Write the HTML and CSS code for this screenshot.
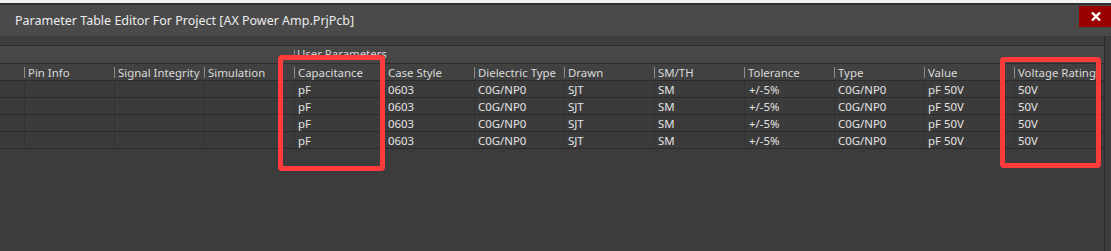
FILE: index.html
```html
<!DOCTYPE html>
<html>
<head>
<meta charset="utf-8">
<link rel="stylesheet" href="styles.css">
</head>
<body>
<div class="topstrip"></div>
<div class="topline"></div>
<div class="titlebar">
  <div class="title">Parameter Table Editor For Project [AX Power Amp.PrjPcb]</div>
  <div class="close">
    <svg width="10" height="9" viewBox="0 0 10 9"><path d="M1 0.5 L9 8.5 M9 0.5 L1 8.5" stroke="#ffffff" stroke-width="2.4" fill="none"/></svg>
  </div>
</div>
<div class="main">
  <div class="content">
    <div class="strip"></div>
    <div class="grouprow">
      <div class="group"><span class="gsep"></span><span class="gtext">User Parameters</span></div>
    </div>
    <div class="row header">
      <div class="cell first"></div>
      <div class="cell"><span class="sep"></span>Pin Info</div>
      <div class="cell"><span class="sep"></span>Signal Integrity</div>
      <div class="cell"><span class="sep"></span>Simulation</div>
      <div class="cell"><span class="sep"></span>Capacitance</div>
      <div class="cell"><span class="sep"></span>Case Style</div>
      <div class="cell"><span class="sep"></span>Dielectric Type</div>
      <div class="cell"><span class="sep"></span>Drawn</div>
      <div class="cell"><span class="sep"></span>SM/TH</div>
      <div class="cell"><span class="sep"></span>Tolerance</div>
      <div class="cell"><span class="sep"></span>Type</div>
      <div class="cell"><span class="sep"></span>Value</div>
      <div class="cell"><span class="sep"></span>Voltage Rating</div>
    </div>
    <div class="row data">
      <div class="cell first"></div><div class="cell"></div><div class="cell"></div><div class="cell"></div>
      <div class="cell">pF</div><div class="cell">0603</div><div class="cell">C0G/NP0</div><div class="cell">SJT</div>
      <div class="cell">SM</div><div class="cell tol">+/-5%</div><div class="cell">C0G/NP0</div><div class="cell">pF 50V</div><div class="cell">50V</div>
    </div>
    <div class="row data">
      <div class="cell first"></div><div class="cell"></div><div class="cell"></div><div class="cell"></div>
      <div class="cell">pF</div><div class="cell">0603</div><div class="cell">C0G/NP0</div><div class="cell">SJT</div>
      <div class="cell">SM</div><div class="cell tol">+/-5%</div><div class="cell">C0G/NP0</div><div class="cell">pF 50V</div><div class="cell">50V</div>
    </div>
    <div class="row data">
      <div class="cell first"></div><div class="cell"></div><div class="cell"></div><div class="cell"></div>
      <div class="cell">pF</div><div class="cell">0603</div><div class="cell">C0G/NP0</div><div class="cell">SJT</div>
      <div class="cell">SM</div><div class="cell tol">+/-5%</div><div class="cell">C0G/NP0</div><div class="cell">pF 50V</div><div class="cell">50V</div>
    </div>
    <div class="row data">
      <div class="cell first"></div><div class="cell"></div><div class="cell"></div><div class="cell"></div>
      <div class="cell">pF</div><div class="cell">0603</div><div class="cell">C0G/NP0</div><div class="cell">SJT</div>
      <div class="cell">SM</div><div class="cell tol">+/-5%</div><div class="cell">C0G/NP0</div><div class="cell">pF 50V</div><div class="cell">50V</div>
    </div>
  </div>
  <div class="vline"></div>
  <div class="rest"></div>
</div>
<div class="mark mark1"></div>
<div class="mark mark2"></div>
</body>
</html>
```
FILE: styles.css
```css
html, body {
  margin: 0;
  padding: 0;
}
body {
  width: 1111px;
  height: 251px;
  overflow: hidden;
  background: #3c3c3c;
  font-family: "Noto Sans", "Open Sans", sans-serif;
  font-size: 11.4px;
  color: #dedede;
  position: relative;
}
.topstrip {
  height: 3px;
  background: #f2f2f2;
}
.topline {
  height: 2px;
  background: #2e2e2e;
}
.titlebar {
  height: 31px;
  background: #4a4a4a;
  display: flex;
  justify-content: space-between;
  align-items: flex-start;
}
.title {
  margin-left: 15px;
  margin-top: 7px;
  font-size: 12.5px;
  line-height: 18px;
  color: #ececec;
  white-space: nowrap;
}
.close {
  width: 32px;
  height: 21px;
  margin-top: 1px;
  background: #9a0000;
  display: flex;
  align-items: center;
  justify-content: center;
}
.close svg {
  display: block;
  margin-left: 1px;
}
.main {
  display: flex;
  height: 215px;
}
.content {
  width: 1104px;
  flex: none;
}
.vline {
  width: 1px;
  background: #2b2b2b;
  flex: none;
}
.rest {
  flex: 1;
}
.strip {
  height: 9px;
  background: #3e3e3e;
  border-bottom: 1px solid #2c2c2c;
}
.grouprow {
  background: #474747;
  border-bottom: 1px solid #2c2c2c;
  padding-left: 294px;
  box-sizing: border-box;
  height: 18px;
}
.group {
  height: 12px;
  overflow: hidden;
  display: flex;
  align-items: flex-start;
}
.gsep {
  width: 1px;
  height: 8px;
  margin-top: 4px;
  background: #8c8c8c;
  flex: none;
}
.gtext {
  margin-left: 2px;
  line-height: 16px;
  color: #d6d6d6;
  white-space: nowrap;
}
.row {
  display: grid;
  grid-template-columns: 24px repeat(12, 90px);
  height: 17px;
  box-sizing: border-box;
  border-bottom: 1px solid #2b2b2b;
}
.header {
  background: #414141;
  color: #dadada;
}
.data {
  background: #3b3b3b;
  color: #e4e4e4;
}
.cell {
  display: flex;
  align-items: center;
  white-space: nowrap;
  overflow: hidden;
  line-height: 16px;
  padding-top: 1px;
}
.header .cell .sep {
  width: 1px;
  height: 11px;
  background: #8c8c8c;
  margin-right: 3px;
  flex: none;
}
.data .cell {
  border-left: 1px solid #333333;
  padding-left: 3px;
}
.data .cell.first {
  border-left: none;
}
.data .cell.tol {
  padding-left: 4px;
}
.mark {
  position: absolute;
  box-sizing: border-box;
  border: 5px solid #ff3b3b;
  border-radius: 4px;
}
.mark1 {
  left: 278px;
  top: 55px;
  width: 107px;
  height: 116px;
}
.mark2 {
  left: 1000px;
  top: 57px;
  width: 101px;
  height: 111px;
}
```
